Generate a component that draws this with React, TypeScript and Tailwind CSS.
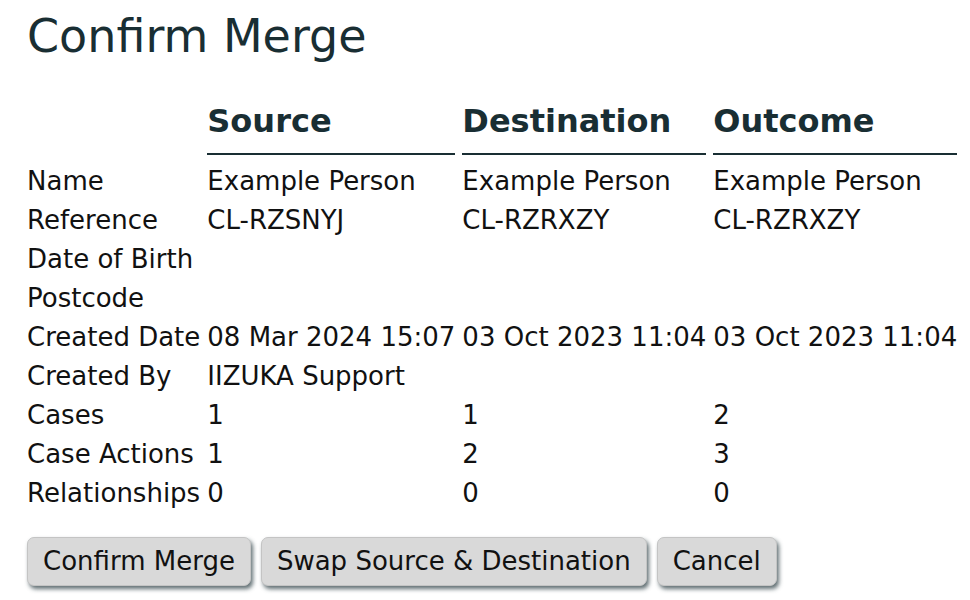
const rows: [string, string, string, string][] = [
  ["Name", "Example Person", "Example Person", "Example Person"],
  ["Reference", "CL-RZSNYJ", "CL-RZRXZY", "CL-RZRXZY"],
  ["Date of Birth", "", "", ""],
  ["Postcode", "", "", ""],
  ["Created Date", "08 Mar 2024 15:07", "03 Oct 2023 11:04", "03 Oct 2023 11:04"],
  ["Created By", "IIZUKA Support", "", ""],
  ["Cases", "1", "1", "2"],
  ["Case Actions", "1", "2", "3"],
  ["Relationships", "0", "0", "0"],
];

function Btn({ label }: { label: string }) {
  return (
    <button className="h-[49px] px-[15px] rounded-[7px] border border-[#c4c4c4] bg-[#d9d9d9] text-[26px] text-[#111] shadow-[2px_3px_4px_rgba(30,50,55,0.7)]">
      {label}
    </button>
  );
}

export default function App() {
  return (
    <div className="bg-white min-h-[600px] pl-[27px] pt-[9px] font-['DejaVu_Sans',Verdana,sans-serif] text-[#111]">
      <h1 className="text-[46px] leading-[54px] text-[#192e33]">Confirm Merge</h1>
      <table className="mt-[35px] border-separate border-spacing-x-[7px] border-spacing-y-0 -ml-[7px] text-[26px] leading-[39px]">
        <thead>
          <tr>
            <th></th>
            <th className="text-left text-[32px] font-bold text-[#192e33] border-b-2 border-[#192e33] leading-[46px] pb-[9px]">Source</th>
            <th className="text-left text-[32px] font-bold text-[#192e33] border-b-2 border-[#192e33] leading-[46px] pb-[9px]">Destination</th>
            <th className="text-left text-[32px] font-bold text-[#192e33] border-b-2 border-[#192e33] leading-[46px] pb-[9px]">Outcome</th>
          </tr>
        </thead>
        <tbody>
          {rows.map((r, i) => (
            <tr key={i}>
              {r.map((c, j) => (
                <td key={j} className={`whitespace-nowrap p-0 align-middle ${i === 0 ? "pt-[7px]" : ""}`}>{c}</td>
              ))}
            </tr>
          ))}
        </tbody>
      </table>
      <div className="flex gap-[10px] mt-[24px]">
        <Btn label="Confirm Merge" />
        <Btn label="Swap Source & Destination" />
        <Btn label="Cancel" />
      </div>
    </div>
  );
}
